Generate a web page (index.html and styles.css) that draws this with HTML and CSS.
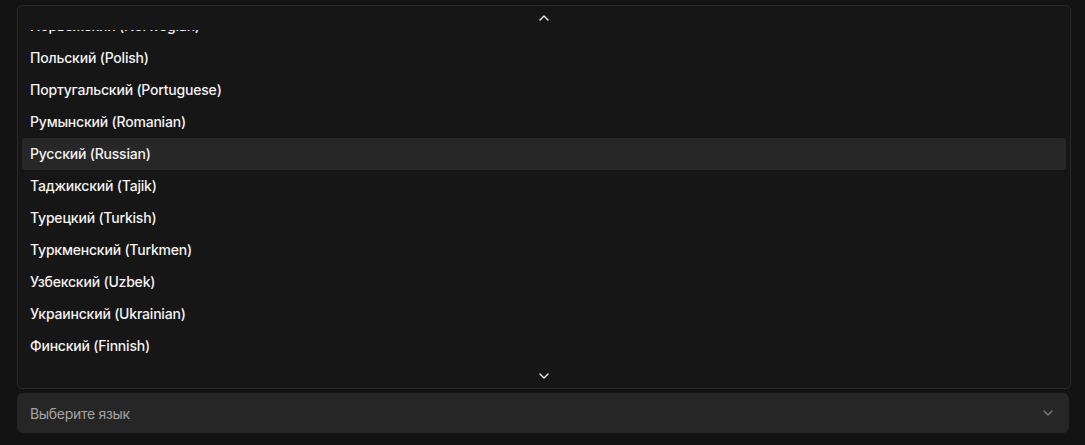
FILE: index.html
```html
<!DOCTYPE html>
<html lang="ru">
<head>
    <meta charset="UTF-8">
    <title>Выбор языка</title>
    <link rel="stylesheet" href="styles.css">
</head>
<body>
<div class="field">
    <!--выпадающий список-->
    <div class="menu">
        <div class="scroll-btn">
            <svg width="16" height="16" viewBox="0 0 24 24" fill="none" stroke="currentColor" stroke-width="2" stroke-linecap="round" stroke-linejoin="round"><path d="m18 15-6-6-6 6"/></svg>
        </div>
        <div class="viewport" id="viewport">
            <ul class="list">
                <li>Азербайджанский (Azerbaijani)</li>
                <li>Английский (English)</li>
                <li>Армянский (Armenian)</li>
                <li>Белорусский (Belarusian)</li>
                <li>Грузинский (Georgian)</li>
                <li>Казахский (Kazakh)</li>
                <li>Киргизский (Kyrgyz)</li>
                <li>Китайский (Chinese)</li>
                <li>Корейский (Korean)</li>
                <li>Латышский (Latvian)</li>
                <li>Литовский (Lithuanian)</li>
                <li>Немецкий (German)</li>
                <li>Норвежский (Norwegian)</li>
                <li>Польский (Polish)</li>
                <li>Португальский (Portuguese)</li>
                <li>Румынский (Romanian)</li>
                <li class="active">Русский (Russian)</li>
                <li>Таджикский (Tajik)</li>
                <li>Турецкий (Turkish)</li>
                <li>Туркменский (Turkmen)</li>
                <li>Узбекский (Uzbek)</li>
                <li>Украинский (Ukrainian)</li>
                <li>Финский (Finnish)</li>
                <li>Французский (French)</li>
                <li>Эстонский (Estonian)</li>
                <li>Японский (Japanese)</li>
            </ul>
        </div>
        <div class="scroll-btn">
            <svg width="16" height="16" viewBox="0 0 24 24" fill="none" stroke="currentColor" stroke-width="2" stroke-linecap="round" stroke-linejoin="round"><path d="m6 9 6 6 6-6"/></svg>
        </div>
    </div>
    <!--кнопка выбора-->
    <button class="trigger">
        <span class="placeholder">Выберите язык</span>
        <svg class="trigger-icon" width="16" height="16" viewBox="0 0 24 24" fill="none" stroke="currentColor" stroke-width="2" stroke-linecap="round" stroke-linejoin="round"><path d="m6 9 6 6 6-6"/></svg>
    </button>
</div>
<script>
    //прокручиваем список к нужному месту
    var viewport = document.getElementById("viewport");
    viewport.scrollTop = 408;
</script>
</body>
</html>
```

FILE: styles.css
```css
* {
    margin: 0;
    padding: 0;
    box-sizing: border-box;
}

body {
    background: #131313;
    font-family: Inter, "Noto Sans", sans-serif;
    font-size: 14px;
    color: #f2f2f2;
}

.field {
    display: flex;
    flex-direction: column;
    gap: 4px;
    padding: 5px 14px 0 17px;
}

.menu {
    height: 384px;
    display: flex;
    flex-direction: column;
    background: #161616;
    border: 1px solid #2a2a2a;
    border-radius: 5px;
    overflow: hidden;
}

.scroll-btn {
    height: 24px;
    flex: none;
    display: flex;
    align-items: center;
    justify-content: center;
    color: #eeeeee;
}

.viewport {
    flex: 1;
    overflow-y: auto;
    scrollbar-width: none;
}

.list {
    list-style: none;
    padding: 4px;
}

.list li {
    height: 32px;
    line-height: 32px;
    padding-left: 8px;
    border-radius: 4px;
    white-space: nowrap;
    font-weight: 500;
    letter-spacing: -0.2px;
}

.list li.active {
    background: #272727;
}

.trigger {
    height: 40px;
    width: 1052px;
    display: flex;
    align-items: center;
    justify-content: space-between;
    padding: 0 13px;
    background: #262626;
    border: none;
    border-radius: 6px;
    font-family: inherit;
    font-size: 14px;
    letter-spacing: -0.3px;
    color: #a3a3a3;
    text-align: left;
}

.trigger-icon {
    color: #7a7a7a;
}
```
